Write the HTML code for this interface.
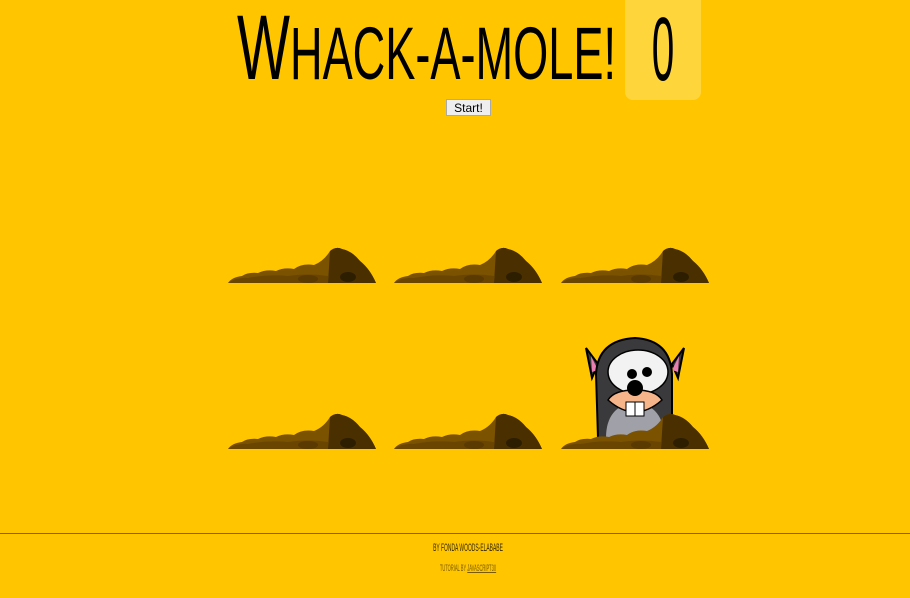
<!DOCTYPE html>
<html><head><style>
html,body{margin:0;padding:0;background:#ffc600;width:910px;height:598px;overflow:hidden;position:relative;font-family:"Liberation Sans",sans-serif}
#title{position:absolute;left:237px;top:6px;width:373px;height:84px;white-space:nowrap;}
#title .in{position:absolute;left:0;top:0;transform-origin:0 0;transform:scaleX(0.61);color:#000;line-height:84px}
#score{position:absolute;left:625px;top:0;width:76px;height:100px;background:#ffd53c;border-radius:0 0 8px 8px}
#score span{position:absolute;left:0;width:76px;text-align:center;top:12px;font-size:90px;line-height:76px;display:block;transform:scaleX(0.45)}
button{position:absolute;left:446px;top:99px;width:45px;height:17px;font:12px "Liberation Sans",sans-serif;background:#eee;border:1px solid #aaa;padding:0;color:#000}
.m{position:absolute;width:148px;height:40px}
#line{position:absolute;left:0;top:533px;width:910px;height:1px;background:#7a6420}
.f{position:absolute;left:13px;width:910px;text-align:center;color:#3a2a00;transform:scaleX(0.45)}
</style></head><body>
<div id="title"><div class="in"><span style="font-size:92px">W</span><span style="font-size:74px">HACK-A-MOLE!</span></div></div>
<div id="score"><span>0</span></div>
<button>Start!</button>
<svg width="0" height="0" style="position:absolute"><defs>
<g id="mound">
<path d="M0 40 Q4 34 14 33 Q20 29 30 30 Q38 26 48 28 Q56 24 66 26 Q74 20 86 22 Q96 18 102 8 Q108 3 114 6 Q124 8 132 18 Q142 26 148 40 Z" fill="#7a5200"/>
<path d="M100 40 L102 8 Q108 3 114 6 Q124 8 132 18 Q142 26 148 40 Z" fill="#4a3000"/>
<path d="M0 40 Q8 34 20 35 Q40 31 60 33 Q80 30 100 33 L100 40Z" fill="#6a4500"/>
<ellipse cx="80" cy="36" rx="10" ry="4" fill="#5a3a00"/>
<ellipse cx="120" cy="34" rx="8" ry="5" fill="#2e1e00"/>
</g></defs></svg>
<svg class="m" style="left:228px;top:243px" viewBox="0 0 148 40"><use href="#mound"/></svg>
<svg class="m" style="left:394px;top:243px" viewBox="0 0 148 40"><use href="#mound"/></svg>
<svg class="m" style="left:561px;top:243px" viewBox="0 0 148 40"><use href="#mound"/></svg>
<svg class="m" style="left:228px;top:409px" viewBox="0 0 148 40"><use href="#mound"/></svg>
<svg class="m" style="left:394px;top:409px" viewBox="0 0 148 40"><use href="#mound"/></svg>
<svg style="position:absolute;left:580px;top:334px" width="110" height="110" viewBox="0 0 110 110">
<path d="M18 30 L6 14 L12 44 Z" fill="#3a3a3c" stroke="#000" stroke-width="2"/>
<path d="M11 22 L12 38 L18 36Z" fill="#e87fb0"/>
<path d="M92 30 L104 14 L98 44 Z" fill="#3a3a3c" stroke="#000" stroke-width="2"/>
<path d="M99 22 L98 38 L92 36Z" fill="#e87fb0"/>
<path d="M18 104 L16 40 Q18 6 55 4 Q90 6 92 40 L92 104Z" fill="#3a3a3c" stroke="#000" stroke-width="2"/>
<path d="M26 104 Q26 72 55 68 Q84 72 84 104Z" fill="#a0a0a8"/>
<ellipse cx="58" cy="38" rx="30" ry="22" fill="#f2f2f2" stroke="#000" stroke-width="1.5"/>
<circle cx="52" cy="40" r="5" fill="#000"/><circle cx="67" cy="38" r="5" fill="#000"/>
<path d="M28 66 Q55 90 82 66 Q76 56 55 56 Q34 56 28 66Z" fill="#f6b48a" stroke="#000" stroke-width="1.5"/>
<circle cx="55" cy="54" r="8" fill="#000"/>
<rect x="46" y="68" width="9" height="14" fill="#fff" stroke="#000"/><rect x="55" y="68" width="9" height="14" fill="#fff" stroke="#000"/>
</svg>
<svg class="m" style="left:561px;top:409px" viewBox="0 0 148 40"><use href="#mound"/></svg>
<div id="line"></div>
<div class="f" style="top:542px;font-size:11px">BY FONDA WOODS-ELABABE</div>
<div class="f" style="top:563px;font-size:9px;color:#7a5a00">TUTORIAL BY <u>JAVASCRIPT30</u></div>
</body></html>
